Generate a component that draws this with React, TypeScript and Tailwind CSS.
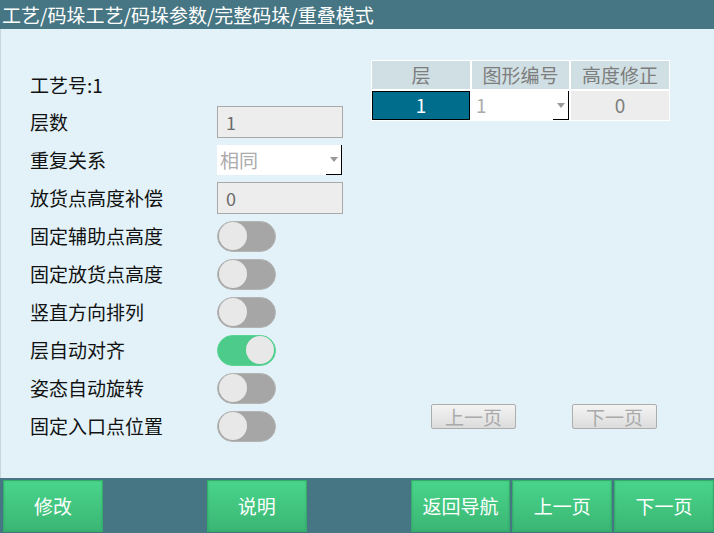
const font = "font-['Noto_Sans_CJK_SC','Noto_Sans',sans-serif]";

function Toggle({ on = false }: { on?: boolean }) {
  return (
    <div
      className={`w-[59px] h-[31px] rounded-full border flex items-center px-[1px] ${
        on ? "bg-[#4ccb8a] border-[#5bd596] justify-end" : "bg-[#a6a6a6] border-[#b4b4b4] justify-start"
      }`}
    >
      <div className="w-[28px] h-[28px] rounded-full bg-[#e8e8e8]" />
    </div>
  );
}

function Arrow() {
  return (
    <svg width="8" height="5" viewBox="0 0 8 5">
      <path d="M0 0H8L4 5Z" fill="#9a9a9a" />
    </svg>
  );
}

function Input({ value }: { value: string }) {
  return (
    <div className="w-[126px] h-[32px] bg-[#ededed] border border-[#a9a9a9] flex items-center pl-[8px] text-[18px] text-[#6b6b6b]">
      {value}
    </div>
  );
}

function Select({ value }: { value: string }) {
  return (
    <div className="relative w-[125px] h-[30px] bg-white flex items-center pl-[3px] text-[19px] text-[#ababab]">
      {value}
      <div className="absolute right-0 top-0 bottom-0 w-[16px] border-r border-b border-black flex items-center justify-center">
        <Arrow />
      </div>
    </div>
  );
}

function GreenBtn({ label, className = "" }: { label: string; className?: string }) {
  return (
    <div
      className={`h-[52px] flex items-center justify-center text-white text-[19px] border border-[#34ad6c] bg-gradient-to-b from-[#49d58b] to-[#3bb674] shadow-[inset_0_0_2px_rgba(0,0,0,0.15)] ${className}`}
    >
      {label}
    </div>
  );
}

function PageBtn({ label }: { label: string }) {
  return (
    <div className="w-[85px] h-[25px] flex items-center justify-center rounded-[2px] border border-[#adadad] bg-gradient-to-b from-[#f4f4f4] to-[#dcdcdc] text-[19px] text-[#aaaaaa] leading-none">
      {label}
    </div>
  );
}

const toggles: [string, boolean][] = [
  ["固定辅助点高度", false],
  ["固定放货点高度", false],
  ["竖直方向排列", false],
  ["层自动对齐", true],
  ["姿态自动旋转", false],
  ["固定入口点位置", false],
];

export default function App() {
  return (
    <div className={`w-[714px] h-[533px] flex flex-col overflow-hidden ${font}`}>
      <div className="h-[29px] bg-[#467683] text-white text-[19px] leading-none flex items-center pl-[2px]">
        工艺/码垛工艺/码垛参数/完整码垛/重叠模式
      </div>

      <div className="flex-1 bg-[#e2f2f8] border-l border-[#c9d6da] flex text-[19px] text-[#111]">
        <div className="pl-[29px] pt-[38px] flex flex-col">
          <div className="h-[36px] flex items-center">工艺号:1</div>
          <div className="h-[38px] flex items-center">
            <div className="w-[187px]">层数</div>
            <Input value="1" />
          </div>
          <div className="h-[38px] flex items-center">
            <div className="w-[187px]">重复关系</div>
            <Select value="相同" />
          </div>
          <div className="h-[38px] flex items-center">
            <div className="w-[187px]">放货点高度补偿</div>
            <Input value="0" />
          </div>
          {toggles.map(([label, on]) => (
            <div key={label} className="h-[38px] flex items-center">
              <div className="w-[187px]">{label}</div>
              <Toggle on={on} />
            </div>
          ))}
        </div>

        <div className="ml-[28px] pt-[31px] flex flex-col">
          <div className="grid grid-cols-[98px_97px_98px] gap-[2px] bg-white border border-white w-[299px]">
            <div className="h-[28px] bg-[#cfdfe3] flex items-center justify-center text-[#7d7d7d]">层</div>
            <div className="h-[28px] bg-[#cfdfe3] flex items-center justify-center text-[#7d7d7d]">图形编号</div>
            <div className="h-[28px] bg-[#cfdfe3] flex items-center justify-center text-[#7d7d7d]">高度修正</div>
            <div className="h-[29px] bg-[#006d8c] border border-black flex items-center justify-center text-white">1</div>
            <div className="relative h-[29px] bg-white flex items-center pl-[4px] text-[#ababab]">
              1
              <div className="absolute right-0 top-0 bottom-0 w-[16px] border-r border-b border-black flex items-center justify-center">
                <Arrow />
              </div>
            </div>
            <div className="h-[29px] bg-[#ededed] flex items-center justify-center text-[#7d7d7d]">0</div>
          </div>
          <div className="mt-[283px] ml-[60px] flex gap-[56px]">
            <PageBtn label="上一页" />
            <PageBtn label="下一页" />
          </div>
        </div>
      </div>

      <div className="h-[55px] bg-[#467683] flex items-start pt-[2px] pl-[3px]">
        <GreenBtn label="修改" className="w-[100px]" />
        <GreenBtn label="说明" className="w-[100px] ml-[104px]" />
        <GreenBtn label="返回导航" className="w-[100px] ml-[104px]" />
        <GreenBtn label="上一页" className="w-[100px] ml-[2px]" />
        <GreenBtn label="下一页" className="w-[100px] ml-[2px]" />
      </div>
    </div>
  );
}
